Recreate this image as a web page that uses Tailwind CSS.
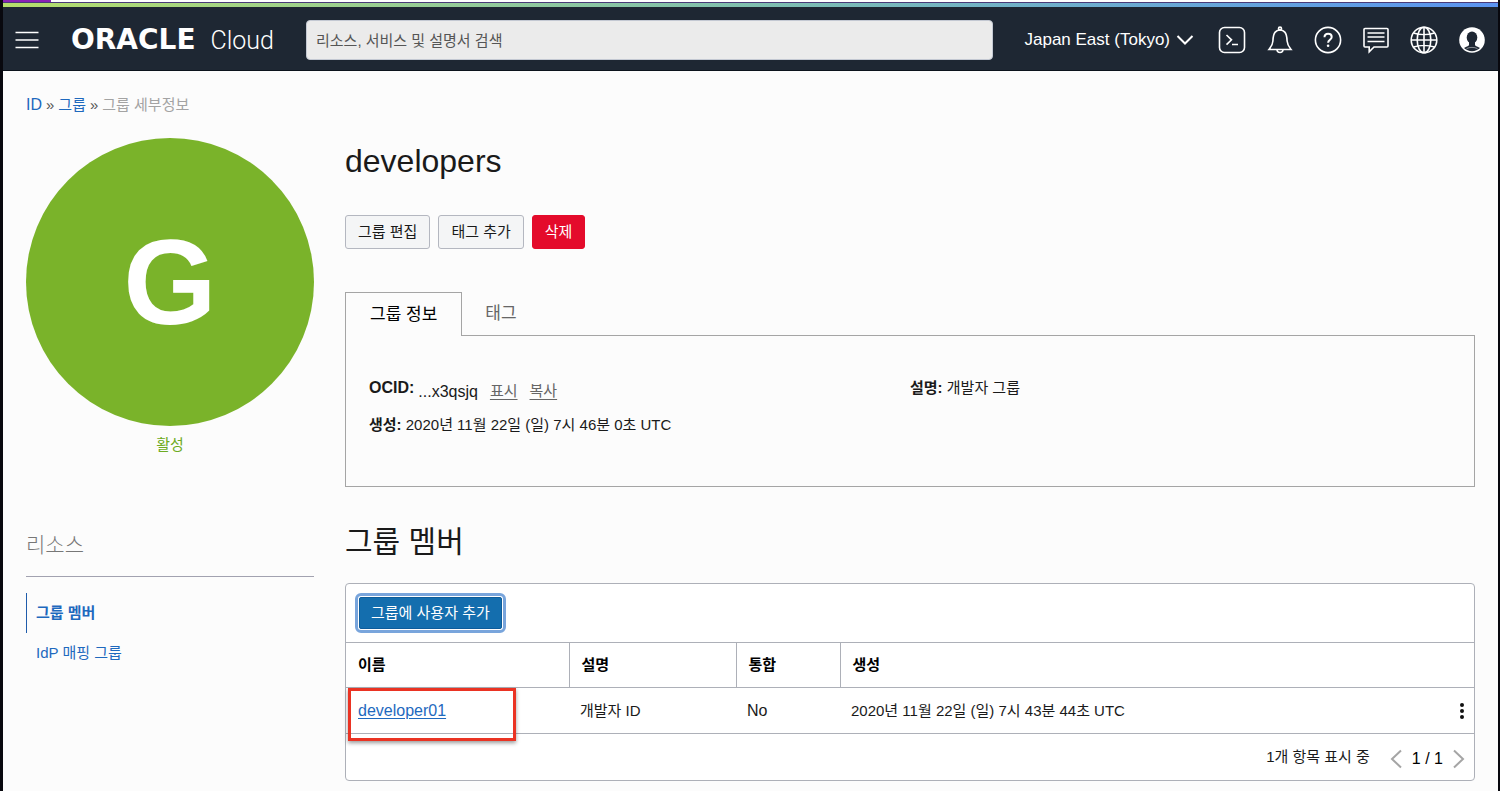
<!DOCTYPE html>
<html lang="ko">
<head>
<meta charset="utf-8">
<meta name="viewport" content="width=device-width, initial-scale=1">
<title>그룹 세부정보</title>
<script src="https://cdn.jsdelivr.net/npm/@tailwindcss/browser@4"></script>
</head>
<body class="bg-[#fcfcfc] font-['Liberation_Sans','Noto_Sans_CJK_KR',sans-serif] text-[15px] leading-6 text-[#1a1a1a]">
<div class="min-h-screen border-l-3 border-r-2 border-l-[#08080e] border-r-[#08080e]">
  <div class="flex h-[3px] border-b border-[#4a3a78] bg-white"><div class="w-12 bg-[#8a22b4]"></div></div>
  <div class="h-1 bg-linear-to-r from-[#b5de6a] via-[#7fbfae] to-[#5b93f0]"></div>

  <header class="flex h-16 items-center border-b border-[#0c131c] bg-[#1e2733] pt-[3px] pr-3 pl-3 text-white">
    <button type="button" aria-label="메뉴" class="flex size-6 shrink-0 items-center justify-center">
      <svg viewBox="0 0 24 24" class="size-6" fill="none" stroke="currentColor" stroke-width="1.5"><path d="M0.5 4.500h23M0.500 12h23M0.500 19.500h23"/></svg>
    </button>
    <a href="#" class="ml-8 flex w-[203px] shrink-0 items-baseline justify-between leading-8">
      <span class="font-['DejaVu_Sans'] text-[28px] font-bold">ORACLE</span>
      <span class="font-['Roboto'] text-[25px] font-light">Cloud</span>
    </a>
    <input type="text" aria-label="검색" placeholder="리소스, 서비스 및 설명서 검색" class="ml-8 h-10 w-[687px] min-w-0 rounded-[4px] border border-[#c3c8d2] bg-[#ebebeb] px-[9px] text-[15px] text-[#222] placeholder:text-[#555]">
    <div class="ml-auto flex shrink-0 items-center">
      <button type="button" class="mr-6 flex items-center gap-1.5 text-[17px]">Japan East (Tokyo)
        <svg viewBox="0 0 18 12" class="h-3 w-[18px]" fill="none" stroke="currentColor" stroke-width="2"><path d="M1.500 2 9 9.500 16.500 2"/></svg>
      </button>
      <div class="flex items-center gap-5">
        <button type="button" aria-label="Cloud Shell"><svg viewBox="0 0 28 28" class="size-7" fill="none" stroke="currentColor" stroke-width="1.600"><rect x="1.500" y="1.500" width="25" height="25" rx="5"/><path d="m8.500 9 5 4.800-5 4.800M14 18.500h6"/></svg></button>
        <button type="button" aria-label="알림"><svg viewBox="0 0 28 28" class="size-7" fill="none" stroke="currentColor" stroke-width="1.600"><path d="M3 23.500h22c-2.500-3-3.700-5-3.900-8.500-.2-4.500-.6-7-2.300-8.900C17.500 4.700 15.800 4 14 4s-3.500.7-4.800 2.100C7.500 8 7.100 10.500 6.900 15c-.2 3.500-1.400 5.500-3.900 8.500Z"/><circle cx="14" cy="2.600" r="1.500"/><path d="M11 23.800c.2 3.600 5.800 3.600 6 0"/></svg></button>
        <button type="button" aria-label="도움말"><svg viewBox="0 0 28 28" class="size-7" fill="none" stroke="currentColor" stroke-width="1.600"><circle cx="14" cy="14" r="12.600"/><path stroke-width="2" d="M10.500 11.300c0-2.200 1.500-3.500 3.600-3.500s3.600 1.300 3.600 3.200c0 2.700-3.600 2.900-3.600 5.800"/><circle cx="14.100" cy="19.700" r="1.300" fill="currentColor" stroke="none"/></svg></button>
        <button type="button" aria-label="피드백"><svg viewBox="0 0 28 28" class="size-7" fill="none" stroke="currentColor" stroke-width="1.600"><path d="M3 2.500h22a1 1 0 0 1 1 1V20a1 1 0 0 1-1 1H12l-4.800 4.800V21H3a1 1 0 0 1-1-1V3.500a1 1 0 0 1 1-1Z"/><path d="M5.500 7h17M5.500 11h17M5.500 15.500h17"/></svg></button>
        <button type="button" aria-label="언어"><svg viewBox="0 0 28 28" class="size-7" fill="none" stroke="currentColor" stroke-width="1.600"><circle cx="14" cy="14" r="12.800"/><ellipse cx="14" cy="14" rx="6.800" ry="12.800"/><path d="M14 1.200v25.600M1.200 14h25.600M3.500 7c6 2 15 2 21 0M3.500 21c6-2 15-2 21 0"/></svg></button>
        <button type="button" aria-label="프로파일"><svg viewBox="0 0 28 28" class="size-7"><circle cx="14" cy="14" r="12.800" fill="#fff"/><ellipse cx="14" cy="11.500" rx="5.300" ry="6" fill="#1e2733"/><path fill="#1e2733" d="M11 16h6v3c.6 1.500 3.200 1.600 5 3-2 2-5 3.200-8 3.200s-6-1.200-8-3.200c1.800-1.400 4.400-1.500 5-3Z"/><path d="M8.500 22.600c3.300-1.600 7.700-1.600 11 0" fill="none" stroke="#fff" stroke-width="0.800" opacity="0.6"/></svg></button>
      </div>
    </div>
  </header>

  <div class="px-[23px] pt-[22px] pb-2">
    <nav aria-label="이동 경로" class="flex gap-1">
      <a href="#" class="text-[16px] text-[#1e69be]">ID</a><span class="text-[#555]">»</span>
      <a href="#" class="text-[#1e69be]">그룹</a><span class="text-[#555]">»</span>
      <span class="text-[#a3a3a3]">그룹 세부정보</span>
    </nav>

    <div class="mt-[21px] flex gap-[31px]">
      <aside class="w-72 shrink-0">
        <div class="flex size-72 items-center justify-center rounded-full bg-[#7ab32a] text-[120px] leading-none font-bold text-white">G</div>
        <p class="mt-[7px] text-center text-[#6dab22]">활성</p>
        <h2 class="mt-18 border-b border-[#a2a2b0] pb-[15px] text-[21px] leading-8 font-light text-[#777]">리소스</h2>
        <ul class="mt-4 text-[#1e69be]">
          <li><a href="#" class="block border-l border-[#1f5cab] py-2 pl-[9px] font-bold">그룹 멤버</a></li>
          <li><a href="#" class="block py-2 pl-2.5">IdP 매핑 그룹</a></li>
        </ul>
      </aside>

      <main class="min-w-0 flex-1 pt-[3px]">
        <h1 class="text-[32px] leading-10">developers</h1>
        <div class="mt-[34px] flex gap-2">
          <button type="button" class="h-[34px] rounded-[3px] border border-[#b4b7c0] bg-[#f4f5f6] px-3">그룹 편집</button>
          <button type="button" class="h-[34px] rounded-[3px] border border-[#b4b7c0] bg-[#f4f5f6] px-3">태그 추가</button>
          <button type="button" class="h-[34px] rounded-[3px] border border-[#e40b2b] bg-[#e40b2b] px-3 text-white">삭제</button>
        </div>

        <div role="tablist" class="mt-[43px] flex text-[17px]">
          <button type="button" role="tab" aria-selected="true" class="z-10 -mb-px h-11 border border-b-0 border-[#a5a5a5] bg-[#fcfcfc] px-6 text-black">그룹 정보</button>
          <button type="button" role="tab" aria-selected="false" class="h-[43px] px-[23px] text-[#666]">태그</button>
        </div>
        <section class="grid h-[152px] grid-cols-2 content-start border border-[#a5a5a5] px-[23px] pt-10">
          <div>
            <div class="flex text-[16px]">
              <b>OCID:</b><span class="ml-1 pt-1">...x3qsjq</span>
              <a href="#" class="ml-3 pt-[3px] text-[15px] text-[#666] underline underline-offset-3">표시</a>
              <a href="#" class="ml-3 pt-[3px] text-[15px] text-[#666] underline underline-offset-3">복사</a>
            </div>
            <p class="mt-[9px]"><b>생성:</b> 2020년 11월 22일 (일) 7시 46분 0초 UTC</p>
          </div>
          <p><b>설명:</b> 개발자 그룹</p>
        </section>

        <h2 class="mt-[35px] text-[30px] leading-10">그룹 멤버</h2>
        <div class="mt-[21px] rounded-[4px] border border-[#adb0b8] bg-white">
          <div class="flex h-[58px] items-center px-[13px]">
            <button type="button" class="h-8 rounded-[2px] border border-[#0d5c9b] bg-[#146eae] px-[11px] text-white ring ring-white outline-3 outline-offset-1 outline-[#79a5dc]">그룹에 사용자 추가</button>
          </div>
          <table class="w-full table-fixed border-collapse text-left">
            <colgroup><col class="w-[223px]"><col class="w-[167px]"><col class="w-[104px]"><col><col class="w-10"></colgroup>
            <thead>
              <tr class="h-[45px] border-y border-[#adb0b8] text-black">
                <th class="border-r border-[#adb0b8] px-3">이름</th>
                <th class="border-r border-[#adb0b8] px-3">설명</th>
                <th class="border-r border-[#adb0b8] px-3">통합</th>
                <th class="px-3">생성</th>
                <th aria-label="작업"></th>
              </tr>
            </thead>
            <tbody>
              <tr class="h-[46px] border-b border-[#adb0b8]">
                <td class="relative px-3"><a href="#" class="text-[16px] text-[#1e69be] underline underline-offset-2">developer01</a>
                  <div class="pointer-events-none absolute top-0 left-0.5 h-[53px] w-[168px] border-3 border-[#ea3323] shadow-[0_2px_4px_rgba(0,0,0,0.4)]"></div>
                </td>
                <td class="px-[11px]">개발자 ID</td>
                <td class="px-[11px] text-[16px]">No</td>
                <td class="px-[11px]">2020년 11월 22일 (일) 7시 43분 44초 UTC</td>
                <td class="pr-2"><button type="button" aria-label="작업 메뉴" class="ml-auto flex h-7 w-2 items-center justify-center"><svg viewBox="0 0 6 18" class="h-[18px] w-1.5 shrink-0" fill="#111"><circle cx="3" cy="3" r="2"/><circle cx="3" cy="9" r="2"/><circle cx="3" cy="15" r="2"/></svg></button></td>
              </tr>
            </tbody>
          </table>
          <div class="flex h-[46px] items-center justify-end pr-[9px]">
            <span>1개 항목 표시 중</span>
            <button type="button" aria-label="이전" class="ml-5 pt-1"><svg viewBox="0 0 12 20" class="h-5 w-3" fill="none" stroke="#a5a5a5" stroke-width="2"><path d="M11 1.500 2 10l9 8.500"/></svg></button>
            <span class="mx-2.5 pt-1 text-[16px] text-black">1 / 1</span>
            <button type="button" aria-label="다음" class="pt-1"><svg viewBox="0 0 12 20" class="h-5 w-3" fill="none" stroke="#a5a5a5" stroke-width="2"><path d="m1 1.500 9 8.500-9 8.500"/></svg></button>
          </div>
        </div>
      </main>
    </div>
  </div>
</div>
</body>
</html>
